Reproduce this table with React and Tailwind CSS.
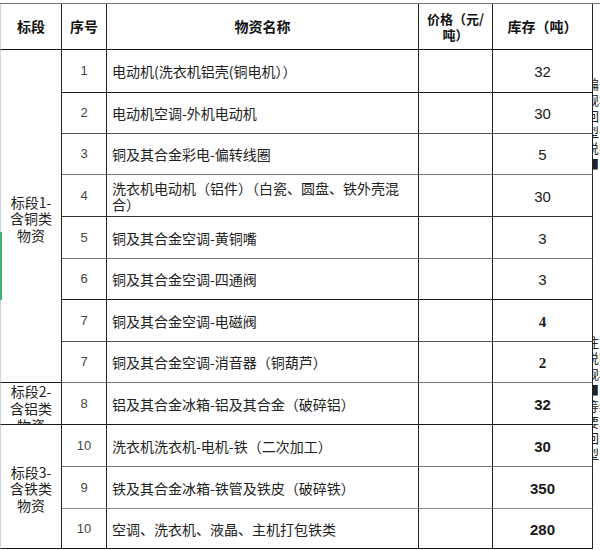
import React from "react";

const rows = [
  { no: "1", name: "电动机(洗衣机铝壳(铜电机））", qty: "32", line: "border-b-[#1a1a1a]" },
  { no: "2", name: "电动机空调-外机电动机", qty: "30", line: "border-b-[#555]" },
  { no: "3", name: "铜及其合金彩电-偏转线圈", qty: "5", line: "border-b-[#777]" },
  { no: "4", name: ["洗衣机电动机（铝件）（白瓷、圆盘、铁外壳混", "合）"], qty: "30", line: "border-b-[#333]" },
  { no: "5", name: "铜及其合金空调-黄铜嘴", qty: "3", line: "border-b-[#777]" },
  { no: "6", name: "铜及其合金空调-四通阀", qty: "3", line: "border-b-[#1a1a1a]" },
  { no: "7", name: "铜及其合金空调-电磁阀", qty: "4", line: "border-b-[#555]", serif: true, bold: true },
  { no: "7", name: "铜及其合金空调-消音器（铜葫芦）", qty: "2", line: "border-b-[#777]", serif: true, bold: true },
  { no: "8", name: "铝及其合金冰箱-铝及其合金（破碎铝）", qty: "32", line: "border-b-[#1a1a1a]", bold: true },
  { no: "10", name: "洗衣机洗衣机-电机-铁（二次加工）", qty: "30", line: "border-b-[#777]", bold: true },
  { no: "9", name: "铁及其合金冰箱-铁管及铁皮（破碎铁）", qty: "350", line: "border-b-[#888]", bold: true },
  { no: "10", name: "空调、洗衣机、液晶、主机打包铁类", qty: "280", line: "border-b-[#1a1a1a]", bold: true },
];

const font = { fontFamily: '"Noto Sans CJK SC", "Liberation Sans", sans-serif' };

export default function App() {
  return (
    <div className="relative w-[600px] h-[550px] bg-white overflow-hidden text-[#111]" style={font}>
      <div className="absolute left-0 top-[232px] w-[2px] h-[68px] bg-[#3cb371]" />
      <div className="pt-[3px]">
        <div className="grid grid-cols-[62px_45px_312px_74px_100px_7px] grid-rows-[46px_43px_41px_41px_42px_42px_41px_42px_41px_42px_42px_42px_40px] border-t border-t-[#777]">
          {/* header */}
          <div className="flex items-center justify-center border-l border-l-[#c5d5e5] border-r border-r-[#222] border-b border-b-[#111] text-[14px] font-bold">
            标段
          </div>
          <div className="flex items-center justify-center border-r border-r-[#222] border-b border-b-[#111] text-[14px] font-bold">
            序号
          </div>
          <div className="flex items-center justify-center border-r border-r-[#222] border-b border-b-[#111] text-[14px] font-bold">
            物资名称
          </div>
          <div className="flex items-center justify-center border-r border-r-[#222] border-b border-b-[#111] text-[13px] font-bold leading-[16px] text-center">
            <span>
              价格（元/
              <br />
              吨）
            </span>
          </div>
          <div className="flex items-center justify-center border-r border-r-[#222] border-b border-b-[#111] text-[14px] font-bold">
            库存（吨）
          </div>
          <div className="row-span-13 overflow-hidden relative">
            <div className="absolute left-[-7px] top-[72px] text-[13px] leading-[16px] text-[#222]">
              <div>编号</div>
              <div>规格</div>
              <div>回收</div>
              <div>型号</div>
              <div>说明</div>
              <div>■■</div>
            </div>
            <div className="absolute left-[-7px] top-[330px] text-[13px] leading-[16px] text-[#222]">
              <div>注意</div>
              <div>说明</div>
              <div>规格</div>
              <div>■■</div>
              <div>等级</div>
              <div>要求</div>
              <div>回收</div>
              <div>型号</div>
            </div>
          </div>

          {/* group labels */}
          <div className="row-start-2 row-span-8 col-start-1 flex items-center justify-center border-l border-l-[#c5d5e5] border-r border-r-[#222] border-b border-b-[#1a1a1a] text-[14px] leading-[16.5px] text-center text-[#222]">
            <span className="pt-[5px]">
              标段1-
              <br />
              含铜类
              <br />
              物资
            </span>
          </div>
          <div className="row-start-10 col-start-1 overflow-hidden border-l border-l-[#c5d5e5] border-r border-r-[#222] border-b border-b-[#1a1a1a] text-[14px] leading-[17px] text-center text-[#222]">
            <div>
              标段2-
              <br />
              含铝类
              <br />
              物资
            </div>
          </div>
          <div className="row-start-11 row-span-3 col-start-1 flex items-center justify-center border-l border-l-[#c5d5e5] border-r border-r-[#222] border-b border-b-[#1a1a1a] text-[14px] leading-[16.5px] text-center text-[#222]">
            <span className="pt-[4px]">
              标段3-
              <br />
              含铁类
              <br />
              物资
            </span>
          </div>

          {/* body rows */}
          {rows.map((r, i) => (
            <React.Fragment key={i}>
              <div
                className={`col-start-2 flex items-center justify-center border-r border-r-[#222] border-b ${r.line} text-[13px] text-[#444]`}
                style={{ gridRowStart: i + 2, fontFamily: '"Liberation Sans", sans-serif' }}
              >
                {r.no}
              </div>
              <div
                className={`col-start-3 flex items-center pl-[5px] border-r border-r-[#222] border-b ${r.line} text-[14px] leading-[16px] text-[#222] whitespace-nowrap`}
                style={{ gridRowStart: i + 2 }}
              >
                {Array.isArray(r.name) ? (
                  <span>
                    {r.name[0]}
                    <br />
                    {r.name[1]}
                  </span>
                ) : (
                  r.name
                )}
              </div>
              <div
                className={`col-start-4 border-r border-r-[#222] border-b ${r.line}`}
                style={{ gridRowStart: i + 2 }}
              />
              <div
                className={`col-start-5 flex items-center justify-center pt-[3px] border-r border-r-[#222] border-b ${r.line} text-[15px] text-[#1a1a1a]`}
                style={{
                  gridRowStart: i + 2,
                  fontFamily: r.serif ? '"Liberation Serif", serif' : '"Liberation Sans", sans-serif',
                  fontWeight: r.bold ? 700 : 400,
                }}
              >
                {r.qty}
              </div>
            </React.Fragment>
          ))}
        </div>
      </div>
    </div>
  );
}
